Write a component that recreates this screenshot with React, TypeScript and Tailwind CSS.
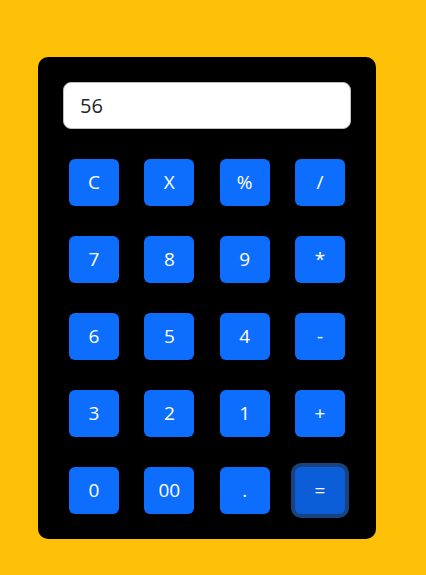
import { useState } from "react";

const rows = [
  ["C", "X", "%", "/"],
  ["7", "8", "9", "*"],
  ["6", "5", "4", "-"],
  ["3", "2", "1", "+"],
  ["0", "00", ".", "="],
];

export default function App() {
  const [value] = useState("56");

  return (
    <div
      className="min-h-screen w-full bg-[#ffc107] pt-[57px] pl-[38px]"
      style={{ fontFamily: '"Open Sans", "Noto Sans", sans-serif' }}
    >
      <div className="w-[338px] h-[482px] bg-black rounded-[10px] p-[25px]">
        {/* Display */}
        <input
          type="text"
          value={value}
          readOnly
          className="block w-full h-[47px] px-4 rounded-[8px] border border-[#b9bec4] bg-white text-[20px] text-[#212529] outline-none"
        />

        {/* Keys */}
        <div className="mt-[30px] px-[6px] flex flex-col gap-[30px]">
          {rows.map((row, i) => (
            <div key={i} className="flex justify-between">
              {row.map((key) => (
                <button
                  key={key}
                  className={
                    key === "="
                      ? "w-[50px] h-[47px] rounded-[6px] bg-[#0b5ed7] text-white text-[19px] leading-none flex items-center justify-center shadow-[0_0_0_4px_rgba(49,132,253,0.5)]"
                      : "w-[50px] h-[47px] rounded-[6px] bg-[#0d6efd] text-white text-[19px] leading-none flex items-center justify-center"
                  }
                >
                  {key}
                </button>
              ))}
            </div>
          ))}
        </div>
      </div>
    </div>
  );
}
